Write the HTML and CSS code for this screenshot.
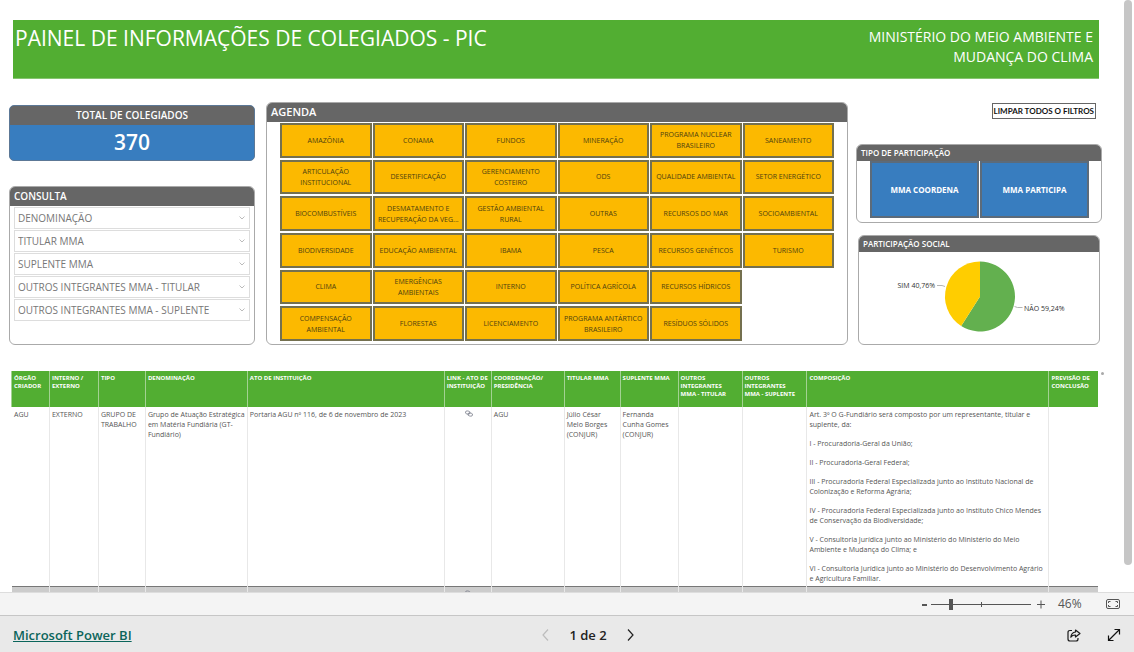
FILE: index.html
```html
<!DOCTYPE html>
<html lang="pt-BR">
<head>
<meta charset="utf-8">
<meta name="viewport" content="width=device-width, initial-scale=1">
<title>Painel de Informações de Colegiados - PIC</title>
<link rel="stylesheet" href="styles.css">
</head>
<body>
<svg class="defs" aria-hidden="true">
  <symbol id="chevron" viewBox="0 0 8 6"><path d="M1.5 1.5 4 4 6.5 1.5" fill="none" stroke="#aaa" stroke-width="0.8"/></symbol>
  <symbol id="link" viewBox="0 0 16 14"><g fill="none" stroke="#777a88" stroke-width="1.5"><rect x="1" y="2" width="9" height="6" rx="3" transform="rotate(12 5 5)"/><rect x="6" y="6" width="9" height="6" rx="3" transform="rotate(12 10 9)"/></g></symbol>
</svg>
<div class="viewport">
  <main class="report">
    <header class="banner">
      <h1 class="banner-title">PAINEL DE INFORMAÇÕES DE COLEGIADOS - PIC</h1>
      <p class="banner-org">MINISTÉRIO DO MEIO AMBIENTE E<br>MUDANÇA DO CLIMA</p>
    </header>

    <div class="panels">
      <div class="col col-left">
        <section class="total">
          <h2 class="total-head">TOTAL DE COLEGIADOS</h2>
          <p class="total-value">370</p>
        </section>
        <section class="card query">
          <h2 class="card-head">CONSULTA</h2>
          <div class="query-list">
            <div class="drop"><select aria-label="Denominação"><option>DENOMINAÇÃO</option></select><svg class="drop-icon"><use href="#chevron"/></svg></div>
            <div class="drop"><select aria-label="Titular MMA"><option>TITULAR MMA</option></select><svg class="drop-icon"><use href="#chevron"/></svg></div>
            <div class="drop"><select aria-label="Suplente MMA"><option>SUPLENTE MMA</option></select><svg class="drop-icon"><use href="#chevron"/></svg></div>
            <div class="drop"><select aria-label="Outros integrantes MMA - Titular"><option>OUTROS INTEGRANTES MMA - TITULAR</option></select><svg class="drop-icon"><use href="#chevron"/></svg></div>
            <div class="drop"><select aria-label="Outros integrantes MMA - Suplente"><option>OUTROS INTEGRANTES MMA - SUPLENTE</option></select><svg class="drop-icon"><use href="#chevron"/></svg></div>
          </div>
        </section>
      </div>

      <section class="card agenda">
        <h2 class="card-head">AGENDA</h2>
        <div class="tiles">
          <button class="tile">AMAZÔNIA</button>
          <button class="tile">ARTICULAÇÃO<br>INSTITUCIONAL</button>
          <button class="tile">BIOCOMBUSTÍVEIS</button>
          <button class="tile">BIODIVERSIDADE</button>
          <button class="tile">CLIMA</button>
          <button class="tile">COMPENSAÇÃO<br>AMBIENTAL</button>
          <button class="tile">CONAMA</button>
          <button class="tile">DESERTIFICAÇÃO</button>
          <button class="tile">DESMATAMENTO E<br>RECUPERAÇÃO DA VEG...</button>
          <button class="tile">EDUCAÇÃO AMBIENTAL</button>
          <button class="tile">EMERGÊNCIAS<br>AMBIENTAIS</button>
          <button class="tile">FLORESTAS</button>
          <button class="tile">FUNDOS</button>
          <button class="tile">GERENCIAMENTO<br>COSTEIRO</button>
          <button class="tile">GESTÃO AMBIENTAL<br>RURAL</button>
          <button class="tile">IBAMA</button>
          <button class="tile">INTERNO</button>
          <button class="tile">LICENCIAMENTO</button>
          <button class="tile">MINERAÇÃO</button>
          <button class="tile">ODS</button>
          <button class="tile">OUTRAS</button>
          <button class="tile">PESCA</button>
          <button class="tile">POLÍTICA AGRÍCOLA</button>
          <button class="tile">PROGRAMA ANTÁRTICO<br>BRASILEIRO</button>
          <button class="tile">PROGRAMA NUCLEAR<br>BRASILEIRO</button>
          <button class="tile">QUALIDADE AMBIENTAL</button>
          <button class="tile">RECURSOS DO MAR</button>
          <button class="tile">RECURSOS GENÉTICOS</button>
          <button class="tile">RECURSOS HÍDRICOS</button>
          <button class="tile">RESÍDUOS SÓLIDOS</button>
          <button class="tile">SANEAMENTO</button>
          <button class="tile">SETOR ENERGÉTICO</button>
          <button class="tile">SOCIOAMBIENTAL</button>
          <button class="tile">TURISMO</button>
        </div>
      </section>

      <div class="col col-right">
        <button class="clear">LIMPAR TODOS O FILTROS</button>
        <section class="card kind">
          <h2 class="card-head small">TIPO DE PARTICIPAÇÃO</h2>
          <div class="kind-list">
            <button class="kind-btn">MMA COORDENA</button>
            <button class="kind-btn">MMA PARTICIPA</button>
          </div>
        </section>
        <section class="card social">
          <h2 class="card-head small">PARTICIPAÇÃO SOCIAL</h2>
          <div class="chart">
            <svg class="pie" viewBox="0 0 240 92" role="img" aria-label="SIM 40,76%, NÃO 59,24%">
              <path d="M121 44.5V9.500A35 35 0 1 1 102.200 74.030Z" fill="#63b04f"/>
              <path d="M121 44.500 102.200 74.030A35 35 0 0 1 121 9.500Z" fill="#ffcd00"/>
              <path d="M78 33.500h5l3 1M155.500 54.500l3 1h5" fill="none" stroke="#b5b5b5"/>
              <text class="pie-label" x="76" y="36" text-anchor="end">SIM 40,76%</text>
              <text class="pie-label" x="165" y="59">NÃO 59,24%</text>
            </svg>
          </div>
        </section>
      </div>
    </div>

    <div class="table-wrap">
      <table class="grid">
        <colgroup>
          <col class="c-org"><col class="c-int"><col class="c-tipo"><col class="c-den"><col class="c-ato"><col class="c-link"><col class="c-coord"><col class="c-tit"><col class="c-sup"><col class="c-otit"><col class="c-osup"><col class="c-comp"><col class="c-prev">
        </colgroup>
        <thead>
          <tr>
            <th>ÓRGÃO<br>CRIADOR</th><th>INTERNO /<br>EXTERNO</th><th>TIPO</th><th>DENOMINAÇÃO</th><th>ATO DE INSTITUIÇÃO</th><th>LINK - ATO DE<br>INSTITUIÇÃO</th><th>COORDENAÇÃO/<br>PRESIDÊNCIA</th><th>TITULAR MMA</th><th>SUPLENTE MMA</th><th>OUTROS<br>INTEGRANTES<br>MMA - TITULAR</th><th>OUTROS<br>INTEGRANTES<br>MMA - SUPLENTE</th><th>COMPOSIÇÃO</th><th>PREVISÃO DE<br>CONCLUSÃO</th>
          </tr>
        </thead>
        <tbody>
          <tr>
            <td>AGU</td>
            <td>EXTERNO</td>
            <td>GRUPO DE<br>TRABALHO</td>
            <td>Grupo de Atuação Estratégica<br>em Matéria Fundiária (GT-<br>Fundiário)</td>
            <td>Portaria AGU nº 116, de 6 de novembro de 2023</td>
            <td class="cell-link"><a href="#" aria-label="Link do ato"><svg class="link-icon"><use href="#link"/></svg></a></td>
            <td>AGU</td>
            <td>Júlio César<br>Melo Borges<br>(CONJUR)</td>
            <td>Fernanda<br>Cunha Gomes<br>(CONJUR)</td>
            <td></td>
            <td></td>
            <td>
              <p>Art. 3º O G-Fundiário será composto por um representante, titular e<br>suplente, da:</p>
              <p>I - Procuradoria-Geral da União;</p>
              <p>II - Procuradoria-Geral Federal;</p>
              <p>III - Procuradoria Federal Especializada junto ao Instituto Nacional de<br>Colonização e Reforma Agrária;</p>
              <p>IV - Procuradoria Federal Especializada junto ao Instituto Chico Mendes<br>de Conservação da Biodiversidade;</p>
              <p>V - Consultoria Jurídica junto ao Ministério do Ministério do Meio<br>Ambiente e Mudança do Clima; e</p>
              <p>VI - Consultoria Jurídica junto ao Ministério do Desenvolvimento Agrário<br>e Agricultura Familiar.</p>
            </td>
            <td></td>
          </tr>
          <tr class="alt">
            <td></td><td></td><td></td><td></td><td></td><td class="cell-link"><a href="#" aria-label="Link do ato"><svg class="link-icon"><use href="#link"/></svg></a></td><td></td><td></td><td></td><td></td><td></td><td></td><td></td>
          </tr>
        </tbody>
      </table>
      <span class="table-thumb"></span>
    </div>
  </main>
  <div class="scroll"><div class="scroll-thumb"></div></div>
</div>

<div class="zoombar">
  <button class="icon-btn zoom-step" aria-label="Diminuir zoom"><svg width="5" height="12" viewBox="0 0 5 12"><path d="M0 7h5" stroke="#555" stroke-width="2"/></svg></button>
  <div class="slider">
    <input type="range" min="0" max="100" value="19" aria-label="Zoom">
    <span class="slider-tick"></span>
  </div>
  <button class="icon-btn zoom-plus" aria-label="Aumentar zoom"><svg width="8" height="12" viewBox="0 0 8 12"><path d="M0 6.500h8M4 2.500v8" stroke="#555"/></svg></button>
  <span class="zoom-value">46%</span>
  <button class="icon-btn fit" aria-label="Ajustar à página"><svg width="15" height="12" viewBox="0 0 15 12" fill="none" stroke="#555"><rect x="0.500" y="1.500" width="13" height="9" rx="1.500"/><path d="M2.500 5V3.500h2M9.500 3.500h2V5M2.500 7v1.500h2M9.500 8.500h2V7"/></svg></button>
</div>

<footer class="footer">
  <a class="brand" href="#">Microsoft Power BI</a>
  <nav class="pager" aria-label="Páginas">
    <button class="icon-btn" aria-label="Página anterior" disabled><svg width="7" height="12" viewBox="0 0 7 12"><path d="M6 .5 1 6l5 5.500" fill="none" stroke="#bdbdbd" stroke-width="1.200"/></svg></button>
    <span class="pager-text">1 de 2</span>
    <button class="icon-btn" aria-label="Próxima página"><svg width="7" height="12" viewBox="0 0 7 12"><path d="M1 .5 6 6l-5 5.500" fill="none" stroke="#222" stroke-width="1.200"/></svg></button>
  </nav>
  <div class="tools">
    <button class="icon-btn" aria-label="Compartilhar"><svg width="14" height="13" viewBox="0 0 14 13" fill="none" stroke="#1b1b1b" stroke-width="1.200"><path d="M5 1.500H3Q1 1.500 1 3.500V10Q1 12 3 12H9Q11 12 11 10V9"/><path d="M8.500 1 13 4.500 8.500 8V6Q5.500 5.800 3.800 8.200 4.300 3.500 8.500 3Z" stroke-linejoin="round"/></svg></button>
    <button class="icon-btn" aria-label="Tela cheia"><svg width="14" height="14" viewBox="0 0 14 14" fill="none" stroke="#111" stroke-width="1.200"><path d="M1.500 12.500 12.500 1.500M7.500 1.500h5v5M1.500 7.500v5h5"/></svg></button>
  </div>
</footer>
</body>
</html>
```
FILE: styles.css
```css
* { box-sizing: border-box; }

body {
  margin: 0;
  height: 100vh;
  display: flex;
  flex-direction: column;
  overflow: hidden;
  background: #fff;
  color: #444;
  font-family: "Open Sans", "Noto Sans", sans-serif;
}

h1, h2, p { margin: 0; font-weight: 400; }
button, select { font-family: inherit; margin: 0; }
.defs { display: none; }

.viewport { flex: 1; min-height: 0; display: flex; overflow: hidden; }
.report { flex: 1; min-width: 0; padding: 20px 22px 0 9px; }
.scroll { width: 10px; padding-right: 2px; }
.scroll-thumb { height: 565px; max-height: 96%; border-radius: 4px; background: #c6c6c6; }

.banner {
  display: flex;
  justify-content: space-between;
  margin: 0 3px 0 4px;
  height: 59px;
  padding: 4px 6px 0 2px;
  background: #52ae32;
  border-bottom: 1px solid #86c570;
  color: #fff;
}
.banner-title { font-size: 21px; line-height: 28px; }
.banner-org { font-size: 14px; line-height: 20px; padding-top: 3px; text-align: right; }

.panels {
  display: grid;
  grid-template-columns: 246fr 585fr 246fr;
  column-gap: 8px;
  margin-top: 23px;
  height: 243px;
}
.col { display: flex; flex-direction: column; }
.col-left { padding-top: 3px; }

.total {
  border-radius: 5px;
  overflow: hidden;
  border: 1px solid #5c7896;
  background: #387dbf;
  color: #fff;
  text-align: center;
}
.total-head { background: #666; font-size: 10px; font-weight: 600; line-height: 19px; }
.total-value { font-size: 21px; font-weight: 600; line-height: 35px; }

.card { border: 1px solid #aaa; border-radius: 6px; overflow: hidden; background: #fff; }
.card-head {
  background: #666;
  color: #fff;
  font-size: 10px;
  font-weight: 600;
  line-height: 18px;
  padding: 0 0 1px 4px;
}
.card-head.small { font-size: 8px; line-height: 15px; }

.query { flex: 1; margin-top: 25px; }
.query-list { display: flex; flex-direction: column; gap: 1px; padding: 1px 4px; }
.drop { position: relative; }
.drop select {
  display: block;
  width: 100%;
  height: 22px;
  padding: 0 3px;
  border: 1px solid #ddd;
  border-radius: 0;
  background: #fff;
  color: #777;
  font-size: 10px;
  appearance: none;
}
.drop-icon { position: absolute; right: 4px; top: 8px; width: 8px; height: 6px; pointer-events: none; }

.agenda { display: flex; flex-direction: column; margin-left: 3px; }
.agenda .card-head { font-size: 11px; }
.tiles {
  flex: 1;
  display: grid;
  grid-auto-flow: column;
  grid-template-rows: repeat(6, 1fr);
  grid-template-columns: repeat(6, 1fr);
  gap: 2px 1px;
  padding: 1px 13px 3px;
}
.tile {
  padding: 0;
  border: 2px solid #74704f;
  background: #fcb900;
  color: #4d3f10;
  font-size: 7px;
  line-height: 11px;
  white-space: nowrap;
}

.clear {
  align-self: flex-end;
  margin: 1px 6px 0 0;
  height: 16px;
  padding: 0 1px;
  border: 1px solid #666;
  background: #fff;
  color: #111;
  font-family: Lato, "Open Sans", sans-serif;
  font-size: 8px;
  font-weight: 700;
  line-height: 12px;
  white-space: nowrap;
}
.kind { margin-top: 25px; height: 79px; }
.kind-list { display: grid; grid-template-columns: 1fr 1fr; gap: 1px; padding: 0 12px 0 13px; }
.kind-btn {
  height: 57px;
  padding: 0;
  border: 2px solid #5c6b7a;
  background: #387dbf;
  color: #fff;
  font-size: 8px;
  font-weight: 700;
}
.social { flex: 1; margin: 12px 2px 0; }
.pie { display: block; width: 100%; }
.pie-label { font-size: 7px; fill: #333; }

.table-wrap { display: flex; align-items: flex-start; gap: 3px; margin: 26px -2px 0 2px; }
.grid {
  flex: 1;
  table-layout: fixed;
  border-collapse: collapse;
}
.c-org { width: 38px; }
.c-int { width: 49px; }
.c-tipo { width: 47px; }
.c-den { width: 102px; }
.c-ato { width: 197px; }
.c-link { width: 47px; }
.c-coord { width: 73px; }
.c-tit { width: 56px; }
.c-sup { width: 58px; }
.c-otit { width: 64px; }
.c-osup { width: 65px; }
.c-comp { width: 242px; }
.c-prev { width: 49px; }
.grid th {
  height: 36px;
  padding: 3px 0 0 2px;
  background: #52ae32;
  border-left: 1px solid #a3d292;
  color: #fff;
  font-size: 6px;
  font-weight: 700;
  line-height: 8px;
  text-align: left;
  vertical-align: top;
  white-space: nowrap;
}
.grid td {
  padding: 3px 0 2px 2px;
  border-left: 1px solid #e8e8e8;
  color: #555;
  font-size: 7px;
  line-height: 10px;
  vertical-align: top;
  white-space: nowrap;
}
.grid td:first-child { border-left-color: transparent; }
.grid td p + p { margin-top: 9px; }
.cell-link a { display: flex; justify-content: center; }
.link-icon { width: 8px; height: 7px; }
.grid .alt td { height: 36px; background: #ccc; border-top: 1px solid #777; }
.table-thumb { flex: none; width: 3px; height: 3px; margin-top: 1px; border-radius: 50%; background: #a9a9a9; }

.icon-btn { display: flex; align-items: center; justify-content: center; padding: 0; border: 0; background: none; }

.zoombar {
  height: 23px;
  display: flex;
  align-items: center;
  justify-content: flex-end;
  padding-right: 13px;
  background: #f4f4f4;
  border-top: 1px solid #ddd;
}
.slider { position: relative; width: 100px; height: 12px; margin: 0 6px 0 4px; }
.slider input {
  display: block;
  width: 100%;
  height: 12px;
  margin: 0;
  background: linear-gradient(#555, #555) center / 100% 1px no-repeat;
  appearance: none;
}
.slider input::-webkit-slider-thumb { appearance: none; width: 4px; height: 11px; background: #555; }
.slider-tick { position: absolute; left: 50%; top: 4px; width: 1px; height: 5px; background: #555; }
.zoom-value { width: 24px; margin: 0 24px 0 13px; font-size: 12px; line-height: 16px; color: #555; }

.footer {
  height: 37px;
  display: grid;
  grid-template-columns: 1fr auto 1fr;
  align-items: center;
  padding: 2px 13px 0;
  background: #e9e9e9;
  border-top: 1px solid #c6c6c6;
}
.brand { justify-self: start; color: #0b655b; font-size: 13px; font-weight: 600; line-height: 18px; }
.pager { display: flex; align-items: center; gap: 20px; padding-left: 42px; }
.pager-text { color: #222; font-size: 13px; font-weight: 600; line-height: 18px; }
.tools { display: flex; justify-content: flex-end; gap: 26px; }
```
